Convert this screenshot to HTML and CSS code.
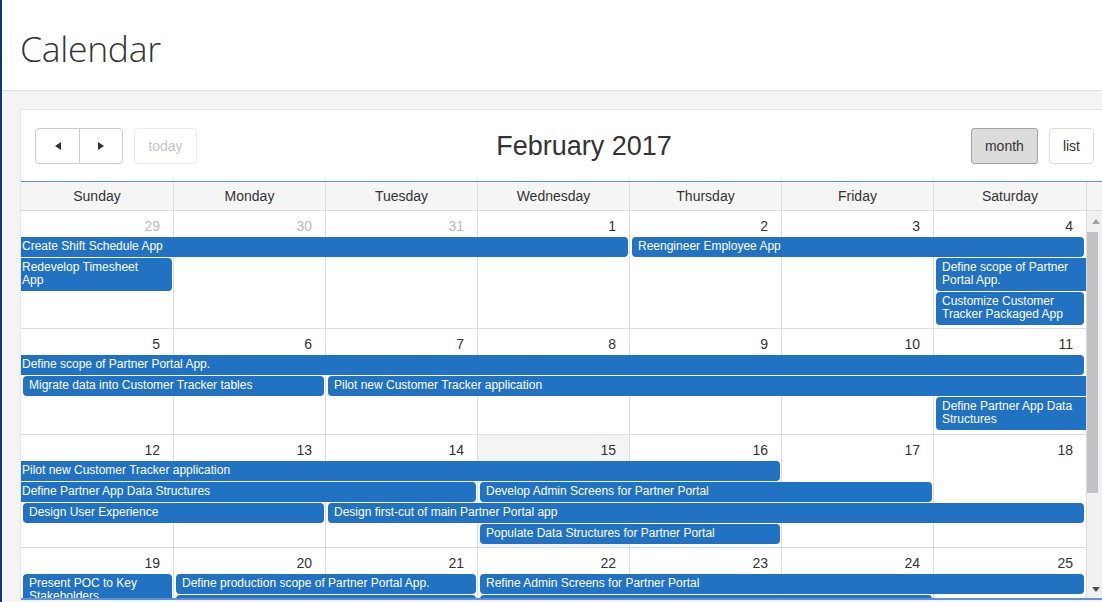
FILE: index.html
```html
<!DOCTYPE html>
<html lang="en">
<head>
<meta charset="utf-8">
<title>Calendar</title>
<link rel="stylesheet" href="styles.css">
</head>
<body>
<div class="app">
  <div class="edge"></div>
  <div class="main">
    <header class="page-header"><h1>Calendar</h1></header>
    <div class="content">
      <div class="panel">
        <div class="toolbar">
          <div class="tb-left">
            <div class="btn-group">
              <button class="btn btn-icon btn-first" type="button" aria-label="prev"><svg width="6" height="8" viewBox="0 0 6 8"><polygon points="6,0 6,8 0,4" fill="#333"/></svg></button>
              <button class="btn btn-icon btn-last" type="button" aria-label="next"><svg width="6" height="8" viewBox="0 0 6 8"><polygon points="0,0 6,4 0,8" fill="#333"/></svg></button>
            </div>
            <button class="btn btn-disabled" type="button">today</button>
          </div>
          <div class="tb-center"><h2>February 2017</h2></div>
          <div class="tb-right">
            <button class="btn btn-active" type="button">month</button>
            <button class="btn btn-light" type="button">list</button>
          </div>
        </div>
        <div class="cal">
          <div class="head">
            <div class="head-grid">
              <div class="dh">Sunday</div>
              <div class="dh">Monday</div>
              <div class="dh">Tuesday</div>
              <div class="dh">Wednesday</div>
              <div class="dh">Thursday</div>
              <div class="dh">Friday</div>
              <div class="dh">Saturday</div>
            </div>
            <div class="gutter"></div>
          </div>
          <div class="body">
            <div class="weeks">
              <div class="week wk1">
                <div class="day c1"><div class="num other">29</div></div>
                <div class="day c2"><div class="num other">30</div></div>
                <div class="day c3"><div class="num other">31</div></div>
                <div class="day c4"><div class="num">1</div></div>
                <div class="day c5"><div class="num">2</div></div>
                <div class="day c6"><div class="num">3</div></div>
                <div class="day c7"><div class="num">4</div></div>
                <div class="ev cl c1 s4 r2">Create Shift Schedule App</div>
                <div class="ev c5 s3 r2 sat">Reengineer Employee App</div>
                <div class="ev cl c1 s1 r3">Redevelop Timesheet App</div>
                <div class="ev cr c7 s1 r3">Define scope of Partner Portal App.</div>
                <div class="ev c7 s1 r4 sat">Customize Customer Tracker Packaged App</div>
              </div>
              <div class="week wk2">
                <div class="day c1"><div class="num">5</div></div>
                <div class="day c2"><div class="num">6</div></div>
                <div class="day c3"><div class="num">7</div></div>
                <div class="day c4"><div class="num">8</div></div>
                <div class="day c5"><div class="num">9</div></div>
                <div class="day c6"><div class="num">10</div></div>
                <div class="day c7"><div class="num">11</div></div>
                <div class="ev cl c1 s7 r2 sat">Define scope of Partner Portal App.</div>
                <div class="ev c1 s2 r3">Migrate data into Customer Tracker tables</div>
                <div class="ev cr c3 s5 r3">Pilot new Customer Tracker application</div>
                <div class="ev cr c7 s1 r4">Define Partner App Data Structures</div>
              </div>
              <div class="week wk3">
                <div class="day c1"><div class="num">12</div></div>
                <div class="day c2"><div class="num">13</div></div>
                <div class="day c3"><div class="num">14</div></div>
                <div class="day c4 today"><div class="num">15</div></div>
                <div class="day c5"><div class="num">16</div></div>
                <div class="day c6"><div class="num">17</div></div>
                <div class="day c7"><div class="num">18</div></div>
                <div class="ev cl c1 s5 r2">Pilot new Customer Tracker application</div>
                <div class="ev cl c1 s3 r3">Define Partner App Data Structures</div>
                <div class="ev c4 s3 r3">Develop Admin Screens for Partner Portal</div>
                <div class="ev c1 s2 r4">Design User Experience</div>
                <div class="ev c3 s5 r4 sat">Design first-cut of main Partner Portal app</div>
                <div class="ev c4 s2 r5">Populate Data Structures for Partner Portal</div>
              </div>
              <div class="week wk4">
                <div class="day c1"><div class="num">19</div></div>
                <div class="day c2"><div class="num">20</div></div>
                <div class="day c3"><div class="num">21</div></div>
                <div class="day c4"><div class="num">22</div></div>
                <div class="day c5"><div class="num">23</div></div>
                <div class="day c6"><div class="num">24</div></div>
                <div class="day c7"><div class="num">25</div></div>
                <div class="ev c1 s1 r2 rs2">Present POC to Key Stakeholders</div>
                <div class="ev c2 s2 r2">Define production scope of Partner Portal App.</div>
                <div class="ev c4 s4 r2 sat">Refine Admin Screens for Partner Portal</div>
                <div class="ev c2 s2 r3">&nbsp;</div>
                <div class="ev c4 s3 r3">&nbsp;</div>
              </div>
            </div>
            <div class="sb">
              <div class="sb-btn sb-up"><svg width="8" height="5" viewBox="0 0 8 5"><polygon points="0,5 4,0 8,5" fill="#a3a3a3"/></svg></div>
              <div class="sb-thumb"></div>
              <div class="sb-track"></div>
              <div class="sb-btn sb-down"><svg width="8" height="5" viewBox="0 0 8 5"><polygon points="0,0 8,0 4,5" fill="#505050"/></svg></div>
            </div>
          </div>
        </div>
      </div>
    </div>
  </div>
</div>
</body>
</html>
```

FILE: styles.css
```css
html, body {
  margin: 0;
  padding: 0;
}
body {
  background: #f4f4f4;
  font-family: "Liberation Sans", Arial, sans-serif;
  color: #333;
  overflow: hidden;
}
.app {
  display: flex;
  min-height: 100vh;
}
.edge {
  width: 2px;
  flex-shrink: 0;
  background: #0c3a6b;
}
.main {
  flex: 1;
  min-width: 0;
}
.page-header {
  box-sizing: content-box;
  height: 65px;
  padding: 25px 0 0 18px;
  background: #fff;
  border-bottom: 1px solid #dddddd;
}
.page-header h1 {
  margin: 0;
  font-family: "Open Sans", sans-serif;
  font-weight: 300;
  font-size: 35.5px;
  line-height: 46px;
  color: #333;
  letter-spacing: -0.3px;
}
.content {
  padding: 18px 0 0 18px;
}
.panel {
  background: #fff;
  border-top: 1px solid #e6e6e6;
  border-left: 1px solid #e6e6e6;
}
.toolbar {
  display: flex;
  align-items: center;
  padding: 18px 8px 17px 14px;
}
.tb-left {
  display: flex;
  gap: 11px;
}
.tb-center {
  flex: 1;
  text-align: center;
}
.tb-center h2 {
  margin: 0;
  font-size: 27px;
  font-weight: normal;
  color: #333;
  line-height: 36px;
}
.tb-right {
  display: flex;
  gap: 11px;
}
.btn-group {
  display: flex;
}
.btn {
  height: 36px;
  box-sizing: border-box;
  padding: 0 13px;
  font-family: "Liberation Sans", Arial, sans-serif;
  font-size: 14px;
  color: #333;
  background: #fff;
  border: 1px solid #cccccc;
  border-radius: 4px;
  margin: 0;
}
.btn-icon {
  width: 45px;
  padding: 0;
  display: flex;
  align-items: center;
  justify-content: center;
}
.btn-first {
  border-top-right-radius: 0;
  border-bottom-right-radius: 0;
}
.btn-last {
  width: 44px;
  margin-left: -1px;
  border-top-left-radius: 0;
  border-bottom-left-radius: 0;
}
.btn-disabled {
  width: 63px;
  padding: 0;
  color: #c6c6c6;
  border-color: #ececec;
}
.btn-active {
  background: #dcdcdc;
  border-color: #a2a2a2;
  border-radius: 3px;
}
.btn-light {
  border-color: #dddddd;
}
.cal {
  display: flex;
  flex-direction: column;
}
.head {
  display: flex;
  background: #f5f5f5;
  border-top: 1px solid #5b93d6;
  border-bottom: 1px solid #dddddd;
}
.head-grid, .week {
  display: grid;
  grid-template-columns: 153px repeat(5, 152px) 153px;
  width: 1066px;
}
.gutter {
  flex: 1;
}
.dh {
  text-align: center;
  font-size: 14px;
  line-height: 28px;
  border-right: 1px solid #dddddd;
  color: #333;
}
.body {
  display: flex;
  height: 387px;
  border-bottom: 2px solid #5b93d6;
}
.weeks {
  width: 1066px;
  overflow: hidden;
  flex-shrink: 0;
}
.week {
  grid-template-rows: 26px repeat(5, auto) 1fr;
  border-bottom: 1px solid #dddddd;
  background: #fff;
}
.wk1 { height: 117px; }
.wk2 { height: 105px; }
.wk3 { height: 112px; }
.wk4 { height: 130px; }
.day {
  grid-row: 1 / -1;
  border-right: 1px solid #dddddd;
}
.day.today {
  background: #f4f4f4;
}
.num {
  text-align: right;
  font-size: 14px;
  line-height: 22px;
  padding: 4px 13px 0 0;
  color: #333;
}
.num.other {
  color: #bbbbbb;
}
.ev {
  align-self: start;
  margin: 0 2px 1px 2px;
  padding: 3px 10px 4px 6px;
  font-size: 12px;
  line-height: 13px;
  color: #fff;
  background: #2272c4;
  border-radius: 4px;
  overflow: hidden;
  white-space: normal;
}
.ev.cl {
  margin-left: -1px;
  padding-left: 2px;
  border-top-left-radius: 0;
  border-bottom-left-radius: 0;
}
.ev.cr {
  margin-right: 1px;
  border-top-right-radius: 0;
  border-bottom-right-radius: 0;
}
.ev.sat {
  margin-right: 3px;
}
.c1 { grid-column-start: 1; }
.c2 { grid-column-start: 2; }
.c3 { grid-column-start: 3; }
.c4 { grid-column-start: 4; }
.c5 { grid-column-start: 5; }
.c6 { grid-column-start: 6; }
.c7 { grid-column-start: 7; }
.s1 { grid-column-end: span 1; }
.s2 { grid-column-end: span 2; }
.s3 { grid-column-end: span 3; }
.s4 { grid-column-end: span 4; }
.s5 { grid-column-end: span 5; }
.s7 { grid-column-end: span 7; }
.r2 { grid-row-start: 2; }
.r3 { grid-row-start: 3; }
.r4 { grid-row-start: 4; }
.r5 { grid-row-start: 5; }
.rs2 { grid-row-end: span 2; }
.sb {
  flex: 1;
  display: flex;
  flex-direction: column;
  background: #f1f1f1;
}
.sb-btn {
  display: flex;
  align-items: center;
  justify-content: center;
  padding-left: 2px;
}
.sb-up { height: 21px; }
.sb-down { height: 18px; }
.sb-thumb {
  height: 261px;
  margin-right: 4px;
  background: #c1c1c6;
}
.sb-track {
  flex: 1;
}
```
